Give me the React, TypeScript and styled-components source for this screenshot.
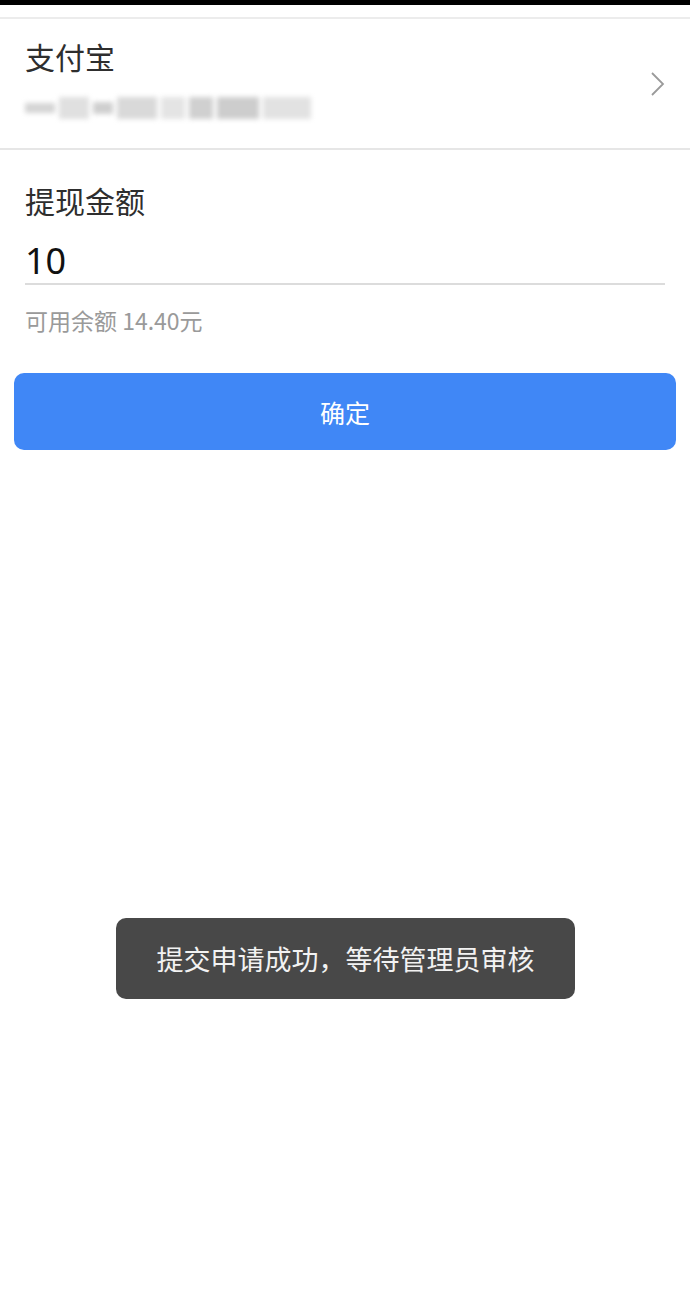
import React from 'react'
import styled, { createGlobalStyle } from 'styled-components'

const GlobalStyle = createGlobalStyle`
  html, body {
    margin: 0;
    padding: 0;
    background: #fff;
  }
  body {
    font-family: "Noto Sans CJK SC", "Noto Sans", sans-serif;
  }
`

const Page = styled.div`
  position: relative;
  min-height: 1307px;
  background: #fff;
`

const StatusStrip = styled.div`
  height: 5px;
  background: #000;
`

const TopGap = styled.div`
  height: 12px;
  border-bottom: 2px solid #ececec;
`

const AccountRow = styled.div`
  display: flex;
  align-items: center;
  justify-content: space-between;
  padding: 0 24px 0 25px;
  height: 129px;
  border-bottom: 2px solid #e6e6e6;
`

const AccountInfo = styled.div`
  align-self: flex-start;
  padding-top: 17px;
  display: flex;
  flex-direction: column;
  gap: 18px;
`

const AccountName = styled.div`
  font-size: 30px;
  line-height: 40px;
  color: #2e2e2e;
`

const Redacted = styled.div`
  display: flex;
  align-items: center;
  gap: 4px;
  height: 28px;
  filter: blur(2.5px);
`

const Block = styled.span<{ w: number; tone: string; h?: number }>`
  display: block;
  width: ${({ w }) => w}px;
  height: ${({ h }) => h ?? 22}px;
  background: ${({ tone }) => tone};
`

const Chevron = styled.svg`
  width: 16px;
  height: 26px;
`

const Section = styled.div`
  padding: 32px 25px 0;
`

const FieldLabel = styled.div`
  font-size: 30px;
  line-height: 36px;
  color: #2e2e2e;
`

const AmountInput = styled.div`
  margin-top: 21px;
  font-family: "Noto Sans", "Noto Sans CJK SC", sans-serif;
  font-size: 36px;
  line-height: 44px;
  color: #111;
  border-bottom: 2px solid #dcdcdc;
  width: 640px;
`

const Hint = styled.div`
  margin-top: 21px;
  font-size: 23px;
  line-height: 28px;
  color: #9a9a9a;
`

const Confirm = styled.button`
  display: flex;
  align-items: center;
  justify-content: center;
  margin: 39px 14px 0;
  width: calc(100% - 28px);
  height: 77px;
  border: none;
  border-radius: 10px;
  background: #4087f6;
  color: #fff;
  font-family: inherit;
  font-size: 25px;
`

const Toast = styled.div`
  position: absolute;
  left: 116px;
  top: 918px;
  width: 459px;
  height: 81px;
  border-radius: 10px;
  background: #484848;
  color: #f2f2f2;
  font-size: 27px;
  display: flex;
  align-items: center;
  justify-content: center;
`

export default function App() {
  return (
    <Page>
      <GlobalStyle />
      <StatusStrip />
      <TopGap />
      <AccountRow>
        <AccountInfo>
          <AccountName>支付宝</AccountName>
          <Redacted>
            <Block w={30} h={10} tone="#d4d4d4" />
            <Block w={30} tone="#e0e0e0" />
            <Block w={20} h={12} tone="#cfcfcf" />
            <Block w={40} tone="#d9d9d9" />
            <Block w={24} tone="#e4e4e4" />
            <Block w={24} tone="#d0d0d0" />
            <Block w={42} tone="#cdcdcd" />
            <Block w={48} tone="#e2e2e2" />
          </Redacted>
        </AccountInfo>
        <Chevron viewBox="0 0 16 26">
          <path d="M2 2 L13 13 L2 24" fill="none" stroke="#9a9a9a" strokeWidth="1.8" />
        </Chevron>
      </AccountRow>
      <Section>
        <FieldLabel>提现金额</FieldLabel>
        <AmountInput>10</AmountInput>
        <Hint>可用余额 14.40元</Hint>
      </Section>
      <Confirm>确定</Confirm>
      <Toast>提交申请成功，等待管理员审核</Toast>
    </Page>
  )
}
